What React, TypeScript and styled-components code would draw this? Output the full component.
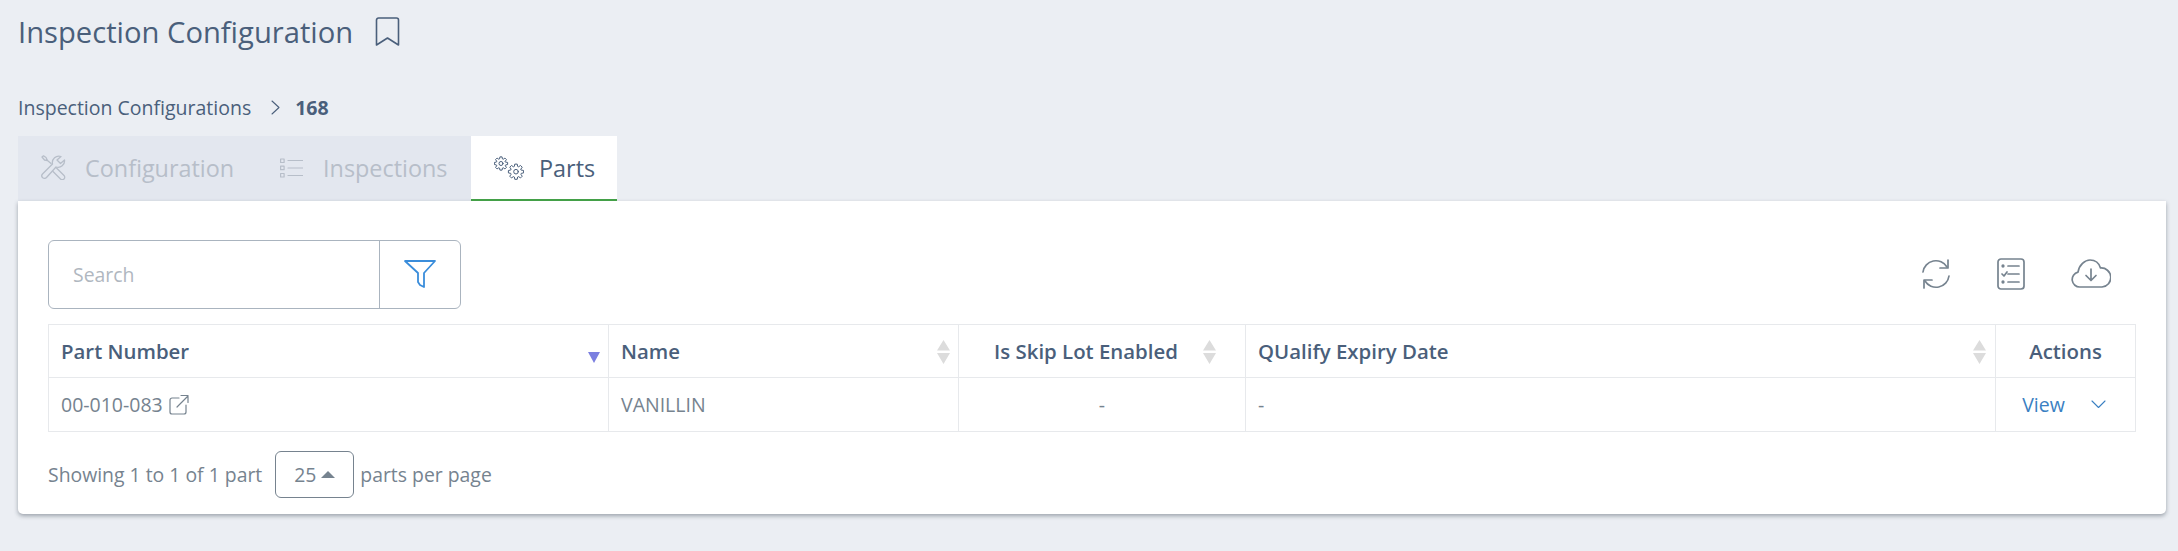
import { ReactNode } from "react";
import styled, { createGlobalStyle } from "styled-components";

const Global = createGlobalStyle`
  html, body {
    margin: 0;
    padding: 0;
    background: #ebeef3;
    font-family: "Open Sans", "Liberation Sans", sans-serif;
  }
`;

const Page = styled.div`
  width: 2178px;
  height: 551px;
  overflow: hidden;
  box-sizing: border-box;
  padding: 0 12px 0 18px;
  background: #ebeef3;
`;

const TitleRow = styled.div`
  height: 64px;
  display: flex;
  align-items: center;
  gap: 22px;
`;

const Title = styled.h1`
  margin: 0;
  font-size: 29.2px;
  font-weight: 400;
  color: #4a5f7b;
`;

const Breadcrumb = styled.div`
  height: 72px;
  padding-top: 14px;
  box-sizing: border-box;
  display: flex;
  align-items: center;
  font-size: 19.5px;
  color: #4a5f7b;
`;

const Crumb = styled.span`
  font-weight: 400;
`;

const CrumbCurrent = styled.span`
  font-weight: 700;
`;

const CrumbSep = styled.span`
  display: flex;
  margin: 0 14px 0 19px;
`;

const Tabs = styled.div`
  display: flex;
  width: 599px;
  height: 65px;
  background: #e3e7ef;
`;

const Tab = styled.div<{ $active?: boolean; $width: number; $pad: number; $gap: number }>`
  width: ${(p) => p.$width}px;
  padding-left: ${(p) => p.$pad}px;
  box-sizing: border-box;
  display: flex;
  align-items: center;
  gap: ${(p) => p.$gap}px;
  font-size: 23.4px;
  color: ${(p) => (p.$active ? "#4a5f7b" : "#b7bec9")};
  background: ${(p) => (p.$active ? "#fff" : "transparent")};
  border-bottom: 2px solid ${(p) => (p.$active ? "#43a047" : "transparent")};
`;

const Card = styled.div`
  width: 2148px;
  height: 313px;
  box-sizing: border-box;
  padding: 38px 30px 0;
  background: #fff;
  border-radius: 0 0 5px 5px;
  box-shadow: 0 2px 4px rgba(60, 70, 85, 0.45);
`;

const Toolbar = styled.div`
  height: 70px;
  display: flex;
  align-items: center;
  justify-content: space-between;
`;

const SearchBox = styled.div`
  width: 413px;
  height: 69px;
  box-sizing: border-box;
  display: flex;
  border: 1px solid #aab4bf;
  border-radius: 6px;
`;

const SearchInput = styled.input`
  width: 331px;
  box-sizing: border-box;
  padding: 0 24px;
  border: 0;
  border-right: 1px solid #aab4bf;
  background: transparent;
  border-radius: 6px 0 0 6px;
  font-family: inherit;
  font-size: 19.4px;
  outline: none;
  &::placeholder {
    color: #b0b7c0;
  }
`;

const FilterButton = styled.div`
  flex: 1;
  display: flex;
  align-items: center;
  justify-content: center;
`;

const ToolIcons = styled.div`
  display: flex;
  align-items: center;
  gap: 46px;
  padding-right: 25px;
`;

const Table = styled.table`
  width: 2088px;
  margin-top: 15px;
  border-collapse: collapse;
  table-layout: fixed;
`;

const Th = styled.th<{ $center?: boolean; $w?: number; $padRight?: number }>`
  position: relative;
  height: 53px;
  box-sizing: border-box;
  padding: 0 ${(p) => p.$padRight ?? 12}px 0 12px;
  width: ${(p) => (p.$w ? `${p.$w}px` : "auto")};
  border: 1px solid #e7e9ec;
  font-size: 20.4px;
  font-weight: 600;
  color: #4a5f7b;
  text-align: ${(p) => (p.$center ? "center" : "left")};
`;

const Td = styled.td<{ $center?: boolean }>`
  height: 54px;
  box-sizing: border-box;
  padding: 0 12px;
  border: 1px solid #e7e9ec;
  font-size: 19.5px;
  color: #76838f;
  text-align: ${(p) => (p.$center ? "center" : "left")};
`;

const SortMark = styled.span<{ $bottom?: boolean; $right: number }>`
  position: absolute;
  right: ${(p) => p.$right}px;
  top: ${(p) => (p.$bottom ? 26 : 15)}px;
  display: flex;
`;

const PartCell = styled.span`
  display: inline-flex;
  align-items: center;
  gap: 6px;
`;

const ViewCell = styled.div`
  display: flex;
  align-items: center;
  justify-content: center;
  gap: 26px;
  padding-right: 3px;
  color: #3a7fc2;
`;

const Footer = styled.div`
  display: flex;
  align-items: center;
  height: 66px;
  margin-top: 9px;
  font-size: 19.4px;
  color: #76838f;
`;

const PageSize = styled.div`
  width: 79px;
  height: 47px;
  margin: 0 6px 0 13px;
  box-sizing: border-box;
  display: flex;
  align-items: center;
  justify-content: center;
  gap: 5px;
  border: 1px solid #76838f;
  border-radius: 6px;
`;

const Caret = styled.span`
  width: 0;
  height: 0;
  border-left: 7px solid transparent;
  border-right: 7px solid transparent;
  border-bottom: 7px solid #76838f;
`;

const Icon = ({
  w,
  h,
  box,
  color = "#76838f",
  sw = 1.5,
  children,
}: {
  w: number;
  h: number;
  box: string;
  color?: string;
  sw?: number;
  children: ReactNode;
}) => (
  <svg
    width={w}
    height={h}
    viewBox={box}
    fill="none"
    stroke={color}
    strokeWidth={sw}
    strokeLinecap="round"
    strokeLinejoin="round"
  >
    {children}
  </svg>
);

const SortArrows = ({ active, right }: { active?: boolean; right: number }) =>
  active ? (
    <SortMark $bottom $right={right}>
      <svg width="12" height="12" viewBox="0 0 12 12">
        <path d="M0 1h12L6 12z" fill="#7b7fe0" />
      </svg>
    </SortMark>
  ) : (
    <SortMark $right={right}>
      <svg width="13" height="24" viewBox="0 0 13 24">
        <path d="M6.5 0L13 10.500H0z M0 13h13L6.500 24z" fill="#dcdcdc" />
      </svg>
    </SortMark>
  );

// cog outline: 8 teeth around a centre
const gearPoints = (cx: number, cy: number, r: number) => {
  const pts: string[] = [];
  for (let i = 0; i < 8; i++) {
    const a = (i * Math.PI) / 4;
    [
      [-0.3, 0.72],
      [-0.16, 1],
      [0.16, 1],
      [0.3, 0.72],
    ].forEach(([da, k]) => {
      pts.push(
        `${(cx + Math.cos(a + da) * r * k).toFixed(2)},${(cy + Math.sin(a + da) * r * k).toFixed(2)}`
      );
    });
  }
  return pts.join(" ");
};

const Gear = ({ x, y, r }: { x: number; y: number; r: number }) => (
  <>
    <polygon points={gearPoints(x, y, r)} />
    <circle cx={x} cy={y} r={r * 0.3} />
  </>
);

function App() {
  return (
    <Page>
      <Global />
      <TitleRow>
        <Title>Inspection Configuration</Title>
        <Icon w={25} h={30} box="0 0 25 30" color="#4a5f7b" sw={1.6}>
          <path d="M1.500 3a2 2 0 0 1 2-2h18a2 2 0 0 1 2 2v25l-11-7-11 7z" />
        </Icon>
      </TitleRow>
      <Breadcrumb>
        <Crumb>Inspection Configurations</Crumb>
        <CrumbSep>
          <Icon w={11} h={15} box="0 0 11 15" color="#4a5f7b" sw={1.1}>
            <path d="M2 1l7 6.500-7 6.500" />
          </Icon>
        </CrumbSep>
        <CrumbCurrent>168</CrumbCurrent>
      </Breadcrumb>
      <Tabs>
        <Tab $width={261} $pad={23} $gap={19}>
          <Icon w={25} h={25} box="0 0 25 25" color="#b7bec9" sw={1.3}>
            <path d="M20 1.500L16 5l3.500 3.500L23.500 5A6.500 6.500 0 0 1 15 12L5.500 22.500A2.500 2.500 0 0 1 1.500 19L11.500 9A6.500 6.500 0 0 1 20 1.500z" />
            <path d="M10 8.500L6.500 5.500 3.500 5 1 2 2.500 0.800 5 2.500 6.500 5.500" />
            <path d="M15.500 13L23 20.500A2.400 2.400 0 0 1 19.500 24L12 16.500" />
          </Icon>
          Configuration
        </Tab>
        <Tab $width={192} $pad={1} $gap={20}>
          <Icon w={23} h={20} box="0 0 23 20" color="#b7bec9" sw={1.2}>
            <path d="M8 2.500h15M8 10h15M8 17.500h15" />
            <rect x="0.600" y="1" width="3.500" height="3.500" />
            <rect x="0.600" y="8.200" width="3.500" height="3.500" />
            <rect x="0.600" y="15.500" width="3.500" height="3.500" />
          </Icon>
          Inspections
        </Tab>
        <Tab $active $width={146} $pad={23} $gap={15}>
          <Icon w={30} h={24} box="0 0 30 24" color="#4a5f7b" sw={1}>
            <Gear x={7} y={7.500} r={6.700} />
            <Gear x={22} y={15.700} r={7.700} />
          </Icon>
          Parts
        </Tab>
      </Tabs>
      <Card>
        <Toolbar>
          <SearchBox>
            <SearchInput placeholder="Search" />
            <FilterButton>
              <Icon w={32} h={30} box="0 0 32 30" color="#3a8ddb" sw={1.8}>
                <path d="M1 2h30L20 14v14l-4-2-2-3v-9z" />
              </Icon>
            </FilterButton>
          </SearchBox>
          <ToolIcons>
            <Icon w={30} h={30} box="0 0 30 30" sw={1.7}>
              <path d="M2 13a13 13 0 0 1 24-5M28 17a13 13 0 0 1-24 5" />
              <path d="M27 1v8h-8M3 29v-8h8" />
            </Icon>
            <Icon w={28} h={32} box="0 0 28 32" sw={1.7}>
              <rect x="1" y="1" width="26" height="30" rx="3" />
              <path d="M11 8h11M11 16h11M11 24h11M5 16l2 2 3-4" />
              <circle cx="6" cy="8" r="0.800" />
              <circle cx="6" cy="24" r="0.800" />
            </Icon>
            <Icon w={40} h={30} box="0 0 40 30" sw={1.7}>
              <path d="M9 28a7.500 7.500 0 0 1-2-14.800C8 6 14 1 19 1c5 0 9 3 10.500 8A9.500 9.500 0 0 1 31 28z" />
              <path d="M20 10v11M15 16.500l5 5 5-5" />
            </Icon>
          </ToolIcons>
        </Toolbar>
        <Table>
          <thead>
            <tr>
              <Th $w={560}>
                Part Number
                <SortArrows active right={8} />
              </Th>
              <Th $w={350}>
                Name
                <SortArrows right={8} />
              </Th>
              <Th $w={287} $center $padRight={44}>
                Is Skip Lot Enabled
                <SortArrows right={29} />
              </Th>
              <Th $w={750}>
                QUalify Expiry Date
                <SortArrows right={9} />
              </Th>
              <Th $center>Actions</Th>
            </tr>
          </thead>
          <tbody>
            <tr>
              <Td>
                <PartCell>
                  00-010-083
                  <Icon w={20} h={21} box="0 0 20 21" sw={1.2}>
                    <path d="M10 4H3a2 2 0 0 0-2 2v12a2 2 0 0 0 2 2h12a2 2 0 0 0 2-2v-7" />
                    <path d="M8 13L19 2M12 1.500h7v7" />
                  </Icon>
                </PartCell>
              </Td>
              <Td>VANILLIN</Td>
              <Td $center>-</Td>
              <Td>-</Td>
              <Td>
                <ViewCell>
                  View
                  <Icon w={15} h={9} box="0 0 15 9" color="#3a7fc2" sw={1.1}>
                    <path d="M1 1l6.500 6.500L14 1" />
                  </Icon>
                </ViewCell>
              </Td>
            </tr>
          </tbody>
        </Table>
        <Footer>
          Showing 1 to 1 of 1 part
          <PageSize>
            25
            <Caret />
          </PageSize>
          parts per page
        </Footer>
      </Card>
    </Page>
  );
}

export default App;
